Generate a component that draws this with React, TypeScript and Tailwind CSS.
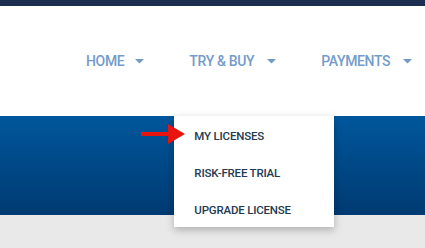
import React from "react";

const Caret = () => (
  <svg width="9" height="5" viewBox="0 0 9 5" className="block">
    <polygon points="0,0 9,0 4.5,4.5" fill="#6f9acb" />
  </svg>
);

const NavItem = ({ label, gap, children }: { label: string; gap: string; children?: React.ReactNode }) => (
  <li className="relative h-full flex items-center">
    <span className={`text-[14px] font-medium text-[#739ccb] tracking-[-0.35px] ${gap}`}>{label}</span>
    <Caret />
    {children}
  </li>
);

export default function App() {
  return (
    <div className="w-[425px] h-[248px] bg-[#e9e9e9] overflow-hidden" style={{ fontFamily: "Roboto, 'Liberation Sans', sans-serif" }}>
      <div className="h-[6px] bg-[#1b2e50]" />
      <header className="h-[110px] bg-white relative z-10">
        <ul className="flex h-full pl-[86px] gap-[45px]">
          <NavItem label="HOME" gap="mr-[11px]" />
          <NavItem label="TRY & BUY" gap="mr-[13px]">
            <div className="absolute top-full left-[-15px] w-[160px] h-[111px] bg-white shadow-[0_3px_8px_rgba(0,0,0,0.25)]">
              <ul className="flex flex-col pl-[20px] pt-[12px] gap-[20px]">
                <li className="text-[11.5px] font-medium text-[#243a52] leading-[17px] tracking-[-0.2px]">MY LICENSES</li>
                <li className="text-[11.5px] font-medium text-[#243a52] leading-[17px] tracking-[-0.2px]">RISK-FREE TRIAL</li>
                <li className="text-[11.5px] font-medium text-[#243a52] leading-[17px] tracking-[-0.2px]">UPGRADE LICENSE</li>
              </ul>
              <svg className="absolute left-[-33px] top-[8px]" width="44" height="20" viewBox="0 0 44 20">
                <rect x="0" y="8" width="28" height="4" fill="#e8140f" />
                <polygon points="27,0 44,10 27,20" fill="#e8140f" />
              </svg>
            </div>
          </NavItem>
          <NavItem label="PAYMENTS" gap="mr-[13px]" />
        </ul>
      </header>
      <div className="h-[99px] bg-gradient-to-b from-[#00579c] to-[#003a72]" />
    </div>
  );
}
